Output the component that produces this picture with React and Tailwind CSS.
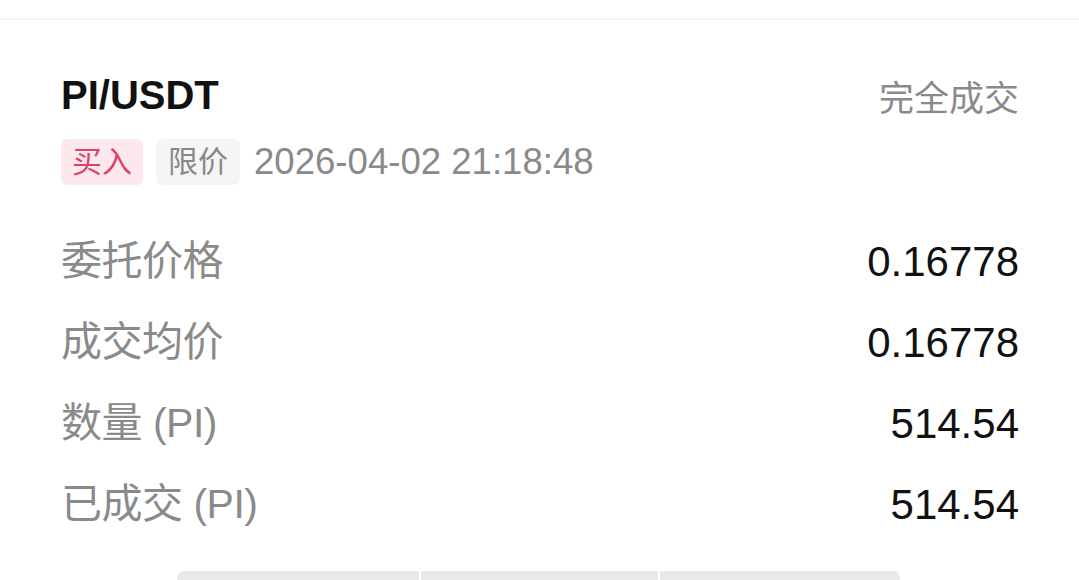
import React from "react";

const rows = [
  { label: "委托价格", value: "0.16778" },
  { label: "成交均价", value: "0.16778" },
  { label: "数量 (PI)", value: "514.54" },
  { label: "已成交 (PI)", value: "514.54" },
];

const font = { fontFamily: '"Liberation Sans", "Noto Sans CJK SC", sans-serif' };

export default function App() {
  return (
    <div className="min-h-screen bg-white" style={font}>
      <div className="h-[18px]" />
      <div className="h-[2px] bg-[#f5f5f5]" />

      <div className="pl-[61px] pr-[60px]">
        {/* header */}
        <div className="mt-[43px] flex items-center justify-between">
          <h1 className="text-[40px] font-bold leading-[56px] text-[#111]">PI/USDT</h1>
          <span className="mt-[8px] text-[35px] leading-[56px] text-[#8a8a8a]">完全成交</span>
        </div>

        <div className="mt-[12px] flex items-center">
          <span className="rounded-[6px] bg-[#fde8ee] px-[11px] text-[30px] leading-[46px] text-[#d9426b]">
            买入
          </span>
          <span className="ml-[13px] rounded-[6px] bg-[#f5f5f5] px-[12px] text-[30px] leading-[46px] text-[#888]">
            限价
          </span>
          <span className="ml-[14px] text-[36.6px] leading-[46px] text-[#8a8a8a]">
            2026-04-02 21:18:48
          </span>
        </div>

        {/* detail rows */}
        <div className="mt-[36px]">
          {rows.map((r) => (
            <div key={r.label} className="flex h-[81px] items-center justify-between">
              <span className="text-[41px] tracking-[-0.5px] text-[#8a8a8a]">{r.label}</span>
              <span className="text-[42px] text-[#111]">{r.value}</span>
            </div>
          ))}
        </div>
      </div>

      {/* buttons peeking at the bottom */}
      <div className="mt-[26px] ml-[177px] flex w-[723px] gap-[2px]">
        <div className="h-[40px] w-[242px] rounded-tl-[8px] bg-[#e9e9e9]" />
        <div className="h-[40px] w-[237px] bg-[#e9e9e9]" />
        <div className="h-[40px] w-[240px] rounded-tr-[6px] bg-[#e9e9e9]" />
      </div>
    </div>
  );
}
